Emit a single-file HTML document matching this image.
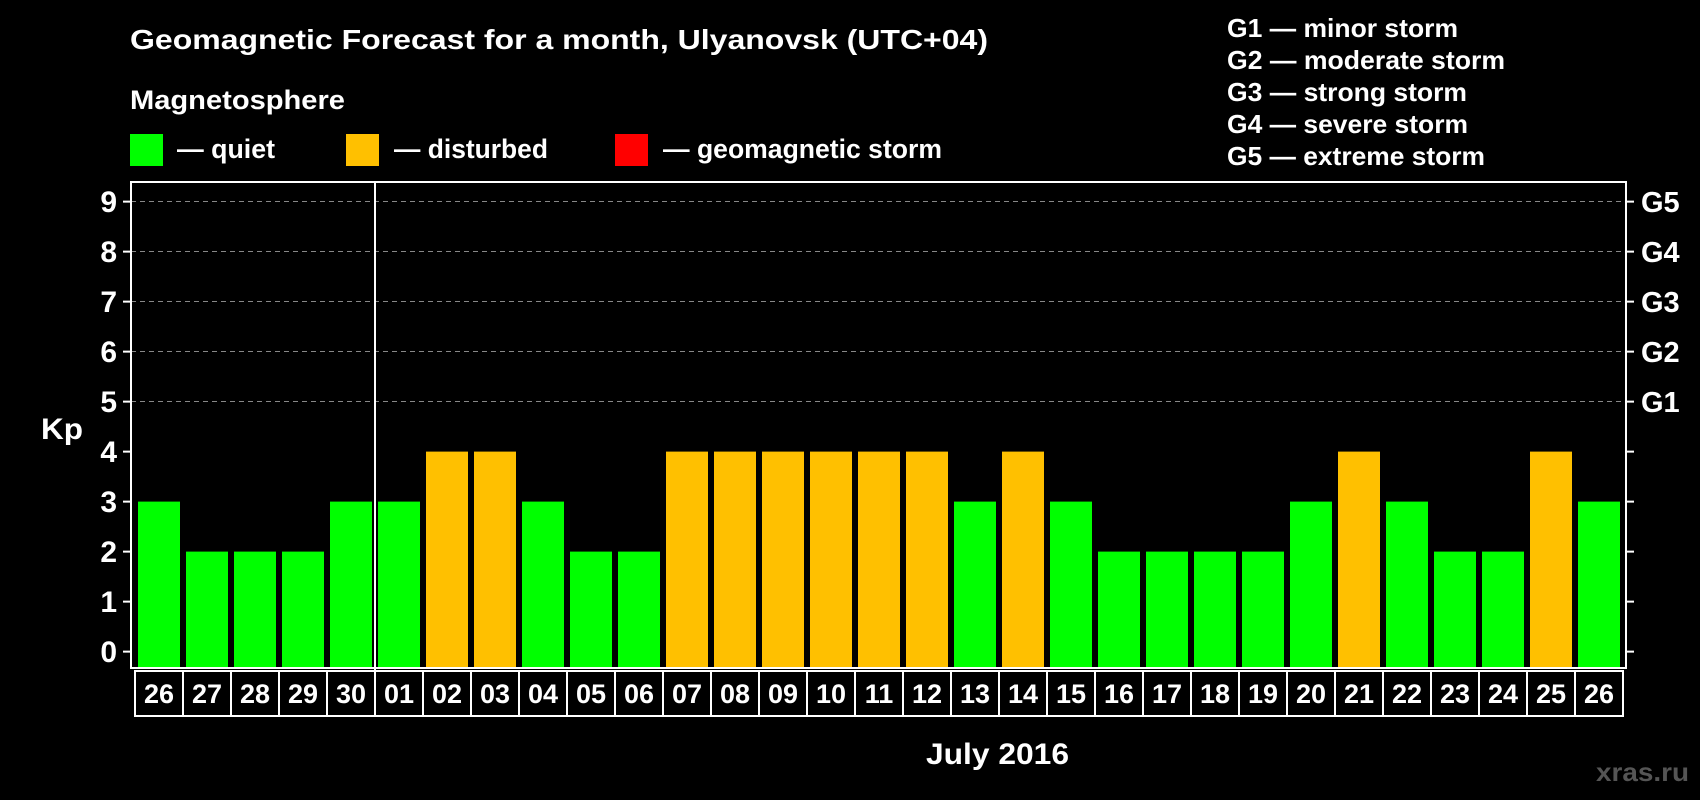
<!DOCTYPE html>
<html><head><meta charset="utf-8"><style>
html,body{margin:0;padding:0;background:#000;width:1700px;height:800px;overflow:hidden}
svg text{font-family:"Liberation Sans",sans-serif;font-weight:bold;fill:#fff}
</style></head><body>
<svg width="1700" height="800" viewBox="0 0 1700 800" xmlns="http://www.w3.org/2000/svg">
<rect width="1700" height="800" fill="#000"/>
<text x="130" y="49" font-size="28" textLength="858" lengthAdjust="spacingAndGlyphs">Geomagnetic Forecast for a month, Ulyanovsk (UTC+04)</text>
<text x="130" y="109" font-size="27" textLength="215" lengthAdjust="spacingAndGlyphs">Magnetosphere</text>
<rect x="130" y="134" width="33" height="32" fill="#00ff00"/>
<text x="177" y="158" font-size="27" textLength="98" lengthAdjust="spacingAndGlyphs">— quiet</text>
<rect x="346" y="134" width="33" height="32" fill="#ffc000"/>
<text x="394" y="158" font-size="27" textLength="154" lengthAdjust="spacingAndGlyphs">— disturbed</text>
<rect x="615" y="134" width="33" height="32" fill="#ff0000"/>
<text x="663" y="158" font-size="27" textLength="279" lengthAdjust="spacingAndGlyphs">— geomagnetic storm</text>
<text x="1227" y="37" font-size="26" textLength="231" lengthAdjust="spacingAndGlyphs">G1 — minor storm</text>
<text x="1227" y="69" font-size="26" textLength="278" lengthAdjust="spacingAndGlyphs">G2 — moderate storm</text>
<text x="1227" y="101" font-size="26" textLength="240" lengthAdjust="spacingAndGlyphs">G3 — strong storm</text>
<text x="1227" y="133" font-size="26" textLength="241" lengthAdjust="spacingAndGlyphs">G4 — severe storm</text>
<text x="1227" y="165" font-size="26" textLength="258" lengthAdjust="spacingAndGlyphs">G5 — extreme storm</text>
<g stroke="#888" stroke-width="1" stroke-dasharray="5,4">
<line x1="131" x2="1626" y1="201.5" y2="201.5"/>
<line x1="131" x2="1626" y1="251.5" y2="251.5"/>
<line x1="131" x2="1626" y1="301.5" y2="301.5"/>
<line x1="131" x2="1626" y1="351.5" y2="351.5"/>
<line x1="131" x2="1626" y1="401.5" y2="401.5"/>
</g>
<g>
<rect x="138" y="501.6" width="42" height="166.4" fill="#00ff00"/>
<rect x="186" y="551.6" width="42" height="116.4" fill="#00ff00"/>
<rect x="234" y="551.6" width="42" height="116.4" fill="#00ff00"/>
<rect x="282" y="551.6" width="42" height="116.4" fill="#00ff00"/>
<rect x="330" y="501.6" width="42" height="166.4" fill="#00ff00"/>
<rect x="378" y="501.6" width="42" height="166.4" fill="#00ff00"/>
<rect x="426" y="451.6" width="42" height="216.4" fill="#ffc000"/>
<rect x="474" y="451.6" width="42" height="216.4" fill="#ffc000"/>
<rect x="522" y="501.6" width="42" height="166.4" fill="#00ff00"/>
<rect x="570" y="551.6" width="42" height="116.4" fill="#00ff00"/>
<rect x="618" y="551.6" width="42" height="116.4" fill="#00ff00"/>
<rect x="666" y="451.6" width="42" height="216.4" fill="#ffc000"/>
<rect x="714" y="451.6" width="42" height="216.4" fill="#ffc000"/>
<rect x="762" y="451.6" width="42" height="216.4" fill="#ffc000"/>
<rect x="810" y="451.6" width="42" height="216.4" fill="#ffc000"/>
<rect x="858" y="451.6" width="42" height="216.4" fill="#ffc000"/>
<rect x="906" y="451.6" width="42" height="216.4" fill="#ffc000"/>
<rect x="954" y="501.6" width="42" height="166.4" fill="#00ff00"/>
<rect x="1002" y="451.6" width="42" height="216.4" fill="#ffc000"/>
<rect x="1050" y="501.6" width="42" height="166.4" fill="#00ff00"/>
<rect x="1098" y="551.6" width="42" height="116.4" fill="#00ff00"/>
<rect x="1146" y="551.6" width="42" height="116.4" fill="#00ff00"/>
<rect x="1194" y="551.6" width="42" height="116.4" fill="#00ff00"/>
<rect x="1242" y="551.6" width="42" height="116.4" fill="#00ff00"/>
<rect x="1290" y="501.6" width="42" height="166.4" fill="#00ff00"/>
<rect x="1338" y="451.6" width="42" height="216.4" fill="#ffc000"/>
<rect x="1386" y="501.6" width="42" height="166.4" fill="#00ff00"/>
<rect x="1434" y="551.6" width="42" height="116.4" fill="#00ff00"/>
<rect x="1482" y="551.6" width="42" height="116.4" fill="#00ff00"/>
<rect x="1530" y="451.6" width="42" height="216.4" fill="#ffc000"/>
<rect x="1578" y="501.6" width="42" height="166.4" fill="#00ff00"/>
</g>
<g fill="none" stroke="#fff" stroke-width="2">
<rect x="135" y="671" width="1488" height="45"/>
<path d="M183 671V716M231 671V716M279 671V716M327 671V716M375 671V716M423 671V716M471 671V716M519 671V716M567 671V716M615 671V716M663 671V716M711 671V716M759 671V716M807 671V716M855 671V716M903 671V716M951 671V716M999 671V716M1047 671V716M1095 671V716M1143 671V716M1191 671V716M1239 671V716M1287 671V716M1335 671V716M1383 671V716M1431 671V716M1479 671V716M1527 671V716M1575 671V716"/>
<path d="M123 651.6h8M123 601.6h8M123 551.6h8M123 501.6h8M123 451.6h8M123 401.6h8M123 351.6h8M123 301.6h8M123 251.6h8M123 201.6h8"/>
<path d="M1626 651.6h8M1626 601.6h8M1626 551.6h8M1626 501.6h8M1626 451.6h8M1626 401.6h8M1626 351.6h8M1626 301.6h8M1626 251.6h8M1626 201.6h8"/>
</g>
<g font-size="27" text-anchor="middle">
<text x="159" y="703">26</text><text x="207" y="703">27</text><text x="255" y="703">28</text><text x="303" y="703">29</text><text x="351" y="703">30</text>
<text x="399" y="703">01</text><text x="447" y="703">02</text><text x="495" y="703">03</text><text x="543" y="703">04</text><text x="591" y="703">05</text>
<text x="639" y="703">06</text><text x="687" y="703">07</text><text x="735" y="703">08</text><text x="783" y="703">09</text><text x="831" y="703">10</text>
<text x="879" y="703">11</text><text x="927" y="703">12</text><text x="975" y="703">13</text><text x="1023" y="703">14</text><text x="1071" y="703">15</text>
<text x="1119" y="703">16</text><text x="1167" y="703">17</text><text x="1215" y="703">18</text><text x="1263" y="703">19</text><text x="1311" y="703">20</text>
<text x="1359" y="703">21</text><text x="1407" y="703">22</text><text x="1455" y="703">23</text><text x="1503" y="703">24</text><text x="1551" y="703">25</text>
<text x="1599" y="703">26</text>
</g>
<g font-size="30" text-anchor="end">
<text x="117" y="662">0</text><text x="117" y="612">1</text><text x="117" y="562">2</text><text x="117" y="512">3</text><text x="117" y="462">4</text>
<text x="117" y="412">5</text><text x="117" y="362">6</text><text x="117" y="312">7</text><text x="117" y="262">8</text><text x="117" y="212">9</text>
</g>
<g font-size="29">
<text x="1641" y="412">G1</text><text x="1641" y="362">G2</text><text x="1641" y="312">G3</text><text x="1641" y="262">G4</text><text x="1641" y="212">G5</text>
</g>
<rect x="131" y="182" width="1495" height="486" fill="none" stroke="#fff" stroke-width="2"/>
<line x1="375" x2="375" y1="182" y2="716" stroke="#fff" stroke-width="2"/>
<text x="41" y="439" font-size="30" textLength="42" lengthAdjust="spacingAndGlyphs">Kp</text>
<text x="926" y="764" font-size="30" textLength="143" lengthAdjust="spacingAndGlyphs">July 2016</text>
<text x="1596" y="781" font-size="26" textLength="93" lengthAdjust="spacingAndGlyphs" style="fill:#555">xras.ru</text>
</svg>
</body></html>
